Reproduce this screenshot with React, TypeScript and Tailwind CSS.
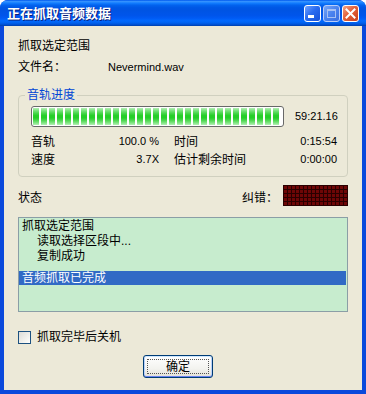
import React from "react";

const cjk = { fontFamily: '"Liberation Sans", "Noto Sans CJK SC", sans-serif' };
const lat = { fontFamily: '"Liberation Sans", Arial, sans-serif' };

function TitleButtons() {
  return (
    <div className="flex items-center gap-[2px]">
      <div className="w-[17px] h-[17px] rounded-[3px] border border-white bg-[linear-gradient(135deg,#6fa2ff_0%,#2a6bf0_45%,#1550d8_100%)] relative">
        <div className="absolute left-[3px] bottom-[3px] w-[6px] h-[3px] bg-white" />
      </div>
      <div className="w-[17px] h-[17px] rounded-[3px] border border-[#b9cdf8] bg-[linear-gradient(135deg,#78a6f6_0%,#4a82ef_50%,#3a6ee0_100%)] flex items-center justify-center">
        <div className="w-[9px] h-[9px] border border-[#a6c0f3] border-t-2" />
      </div>
      <div className="w-[17px] h-[17px] rounded-[3px] border border-white bg-[linear-gradient(135deg,#f3a487_0%,#e2603a_45%,#c8401c_100%)] flex items-center justify-center">
        <svg width="11" height="11" viewBox="0 0 11 11">
          <path d="M1.5 1.5 L9.5 9.5 M9.5 1.5 L1.5 9.5" stroke="white" strokeWidth="2" strokeLinecap="square" />
        </svg>
      </div>
    </div>
  );
}

function ProgressBar() {
  return (
    <div className="w-[253px] h-[21px] rounded-[3px] border border-[#686868] bg-white p-[1px] flex gap-[2px] overflow-hidden">
      {[...Array(31)].map((_, i) => (
        <div
          key={i}
          className="w-[6px] h-full shrink-0 bg-[linear-gradient(to_bottom,#b4efb5_0%,#7be37d_15%,#4bd64d_30%,#26ce28_45%,#26ce28_58%,#4bd64d_72%,#7be37d_86%,#b4efb5_100%)]"
        />
      ))}
    </div>
  );
}

function Led() {
  return (
    <div className="w-[65px] h-[21px] bg-[#2a0000] p-[1px] grid grid-cols-[repeat(16,3px)] grid-rows-[repeat(5,3px)] gap-[1px]">
      {[...Array(80)].map((_, i) => (
        <div key={i} className="bg-[#6e0606]" />
      ))}
    </div>
  );
}

export default function App() {
  return (
    <div className="w-[366px] h-[394px] bg-white">
      <div className="w-[366px] h-[394px] rounded-t-[8px] bg-[#0a49dc] flex flex-col overflow-hidden">
        <div className="h-[26px] shrink-0 flex items-center justify-between pl-[7px] pr-[7px] bg-[linear-gradient(to_bottom,#0058ee_0%,#3593ff_6%,#127dff_12%,#0262ee_20%,#0057e5_30%,#0054e3_40%,#0055eb_60%,#005bf5_70%,#026afe_80%,#0062ef_88%,#0052d6_94%,#0040ab_100%)]">
          <span className="text-white font-bold text-[13px] leading-none [text-shadow:1px_1px_0_#0a1f7a]" style={cjk}>
            正在抓取音频数据
          </span>
          <TitleButtons />
        </div>
        <div className="flex-1 mx-[4px] mb-[4px] bg-[#ece9d8] px-[14px] pt-[12px] flex flex-col text-[12px] text-black" style={cjk}>
          <div className="leading-[16px]">抓取选定范围</div>
          <div className="leading-[16px] mt-[5px] flex">
            <span className="w-[90px]">文件名：</span>
            <span className="text-[11px]" style={lat}>Nevermind.wav</span>
          </div>

          <div className="relative mt-[20px] h-[82px] border border-[#d0d0bf] rounded-[4px] pl-[12px] pt-[10px]">
            <span className="absolute -top-[9px] left-[6px] px-[2px] bg-[#ece9d8] text-[#0046d5] leading-[16px]">音轨进度</span>
            <div className="flex items-center">
              <ProgressBar />
              <span className="ml-[11px] text-[11px]" style={lat}>59:21.16</span>
            </div>
            <div className="mt-[6px] flex flex-col">
              <div className="h-[18px] flex items-center">
                <div className="w-[128px] flex justify-between">
                  <span>音轨</span>
                  <span className="text-[11px]" style={lat}>100.0 %</span>
                </div>
                <div className="ml-[15px] w-[163px] flex justify-between">
                  <span>时间</span>
                  <span className="text-[11px]" style={lat}>0:15:54</span>
                </div>
              </div>
              <div className="h-[18px] flex items-center">
                <div className="w-[128px] flex justify-between">
                  <span>速度</span>
                  <span className="text-[11px]" style={lat}>3.7X</span>
                </div>
                <div className="ml-[15px] w-[163px] flex justify-between">
                  <span>估计剩余时间</span>
                  <span className="text-[11px]" style={lat}>0:00:00</span>
                </div>
              </div>
            </div>
          </div>

          <div className="mt-[8px] h-[21px] flex items-center">
            <span className="mt-[4px]">状态</span>
            <span className="ml-auto mr-[5px] mt-[4px]">纠错：</span>
            <Led />
          </div>

          <div className="mt-[11px] h-[95px] border border-[#8b9ea6] bg-[#c7ecce] pt-[1px] flex flex-col leading-[15px]">
            <div className="h-[15px] pl-[3px]">抓取选定范围</div>
            <div className="h-[15px] pl-[18px]">读取选择区段中...</div>
            <div className="h-[15px] pl-[18px]">复制成功</div>
            <div className="h-[7px]" />
            <div className="h-[14px] leading-[14px] pl-[3px] mr-[1px] bg-[#316ac5] text-white">音频抓取已完成</div>
          </div>

          <div className="mt-[19px] flex items-center">
            <div className="w-[13px] h-[13px] border border-[#1c5180] bg-[linear-gradient(135deg,#dcdcd7_0%,#f4f4f0_70%,#ffffff_100%)]" />
            <span className="ml-[6px] leading-[13px]">抓取完毕后关机</span>
          </div>

          <div className="mt-[11px] ml-[125px] w-[70px] h-[23px] rounded-[3px] border border-[#003c74] bg-[linear-gradient(to_bottom,#ffffff_0%,#f3f3ef_60%,#e3e1d8_100%)] shadow-[inset_0_1px_0_#cee7ff,inset_0_-1px_0_#6982ee,inset_1px_0_0_#b9d1fa,inset_-1px_0_0_#b9d1fa] p-[3px]">
            <div className="w-full h-full border border-dotted border-[#555] flex items-center justify-center leading-none">确定</div>
          </div>
        </div>
      </div>
    </div>
  );
}
